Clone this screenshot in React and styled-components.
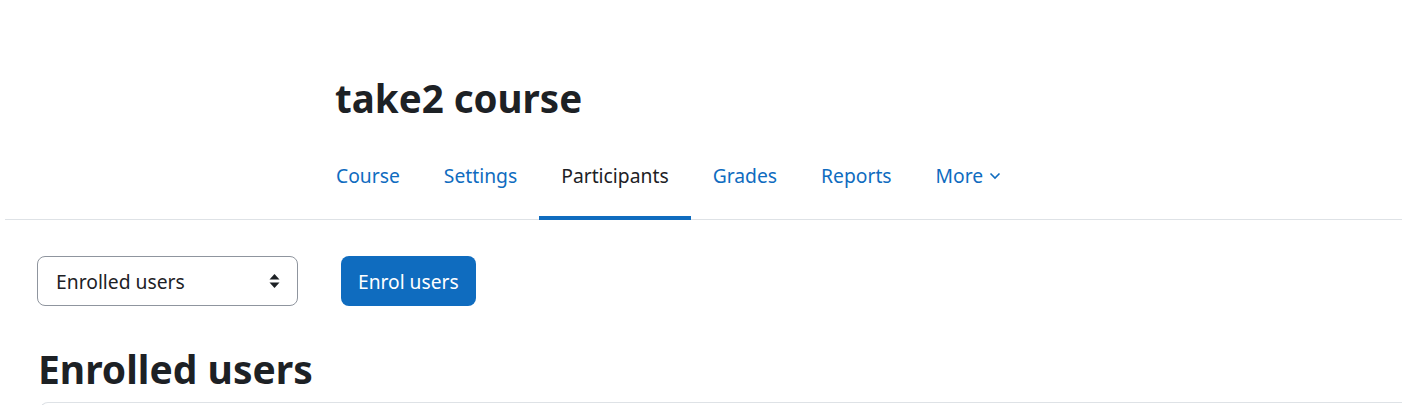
import React from 'react'
import styled, { createGlobalStyle } from 'styled-components'

const GlobalStyle = createGlobalStyle`
  body {
    margin: 0;
    background: #fff;
    font-family: "Noto Sans", "Open Sans", sans-serif;
    color: #1d2125;
  }
`

const Page = styled.div`
  width: 1402px;
  height: 405px;
  overflow: hidden;
  background: #fff;
`

const Header = styled.header`
  padding: 75px 0 0 335px;
`

const Title = styled.h1`
  margin: 0;
  font-size: 38.5px;
  font-weight: 700;
  line-height: 1.2;
`

const SecondaryNav = styled.nav`
  display: flex;
  margin: 32px 0 0 5px;
  padding-left: 309px;
  border-bottom: 1px solid #dee2e6;
`

const NavLink = styled.a`
  display: flex;
  align-items: center;
  gap: 6px;
  padding: 8px 22px 25px;
  margin-bottom: -1px;
  font-size: 19.3px;
  line-height: 30px;
  color: ${p => (p.$active ? '#1d2125' : '#0f6cbf')};
  border-bottom: 4px solid ${p => (p.$active ? '#0f6cbf' : 'transparent')};
  text-decoration: none;
  cursor: pointer;
`

const Content = styled.main`
  padding: 36px 0 0 37px;
`

const Toolbar = styled.div`
  display: flex;
  align-items: center;
  gap: 43px;
`

const Select = styled.div`
  box-sizing: border-box;
  display: flex;
  align-items: center;
  justify-content: space-between;
  width: 261px;
  height: 50px;
  padding: 0 17px 0 18px;
  border: 1px solid #8f959e;
  border-radius: 8px;
  font-size: 19.3px;
  color: #1d2125;
`

const Button = styled.button`
  box-sizing: border-box;
  height: 50px;
  padding: 0 17px;
  border: none;
  border-radius: 8px;
  background: #0f6cbf;
  color: #fff;
  font-family: inherit;
  font-size: 19.2px;
`

const Heading = styled.h2`
  margin: 40px 0 0 1px;
  font-size: 39px;
  font-weight: 700;
  line-height: 1.2;
`

const Card = styled.div`
  margin: 9px 0 0 3px;
  height: 40px;
  border: 1px solid #dee2e6;
  border-right: none;
  border-radius: 8px 0 0 0;
`

const SortIcon = () => (
  <svg width="11" height="16" viewBox="0 0 11 16">
    <path d="M5.5 1 L10.5 6.5 H0.5 Z" fill="#1d2125" />
    <path d="M5.5 15 L10.5 9.5 H0.5 Z" fill="#1d2125" />
  </svg>
)

const Chevron = () => (
  <svg width="12" height="8" viewBox="0 0 12 8">
    <path d="M1.5 1.5 L6 6 L10.5 1.5" fill="none" stroke="#0f6cbf" strokeWidth="1.6" />
  </svg>
)

const tabs = ['Course', 'Settings', 'Participants', 'Grades', 'Reports']

export default function App() {
  return (
    <Page>
      <GlobalStyle />
      <Header>
        <Title>take2 course</Title>
      </Header>
      <SecondaryNav>
        {tabs.map(t => (
          <NavLink key={t} $active={t === 'Participants'}>{t}</NavLink>
        ))}
        <NavLink>More <Chevron /></NavLink>
      </SecondaryNav>
      <Content>
        <Toolbar>
          <Select>
            <span>Enrolled users</span>
            <SortIcon />
          </Select>
          <Button>Enrol users</Button>
        </Toolbar>
        <Heading>Enrolled users</Heading>
        <Card />
      </Content>
    </Page>
  )
}
